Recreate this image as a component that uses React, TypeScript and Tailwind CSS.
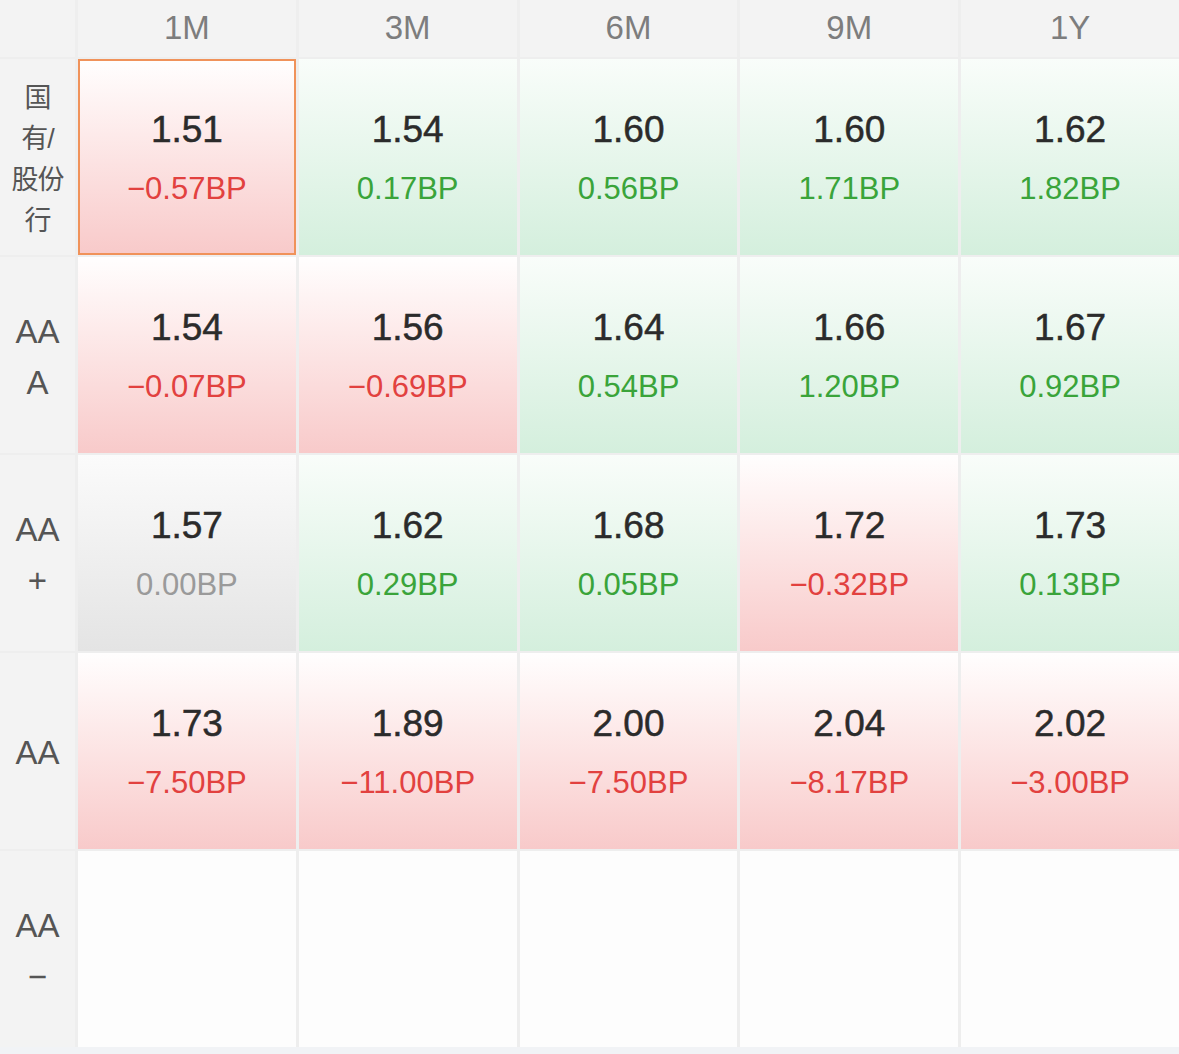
type Tone = 'up' | 'down' | 'flat' | 'none';

type Cell = { value?: string; bp?: string; tone: Tone; selected?: boolean };

const headers = ['1M', '3M', '6M', '9M', '1Y'];

const rows: { label: string[]; cells: Cell[] }[] = [
    {
        label: ['国', '有/', '股份', '行'],
        cells: [
            { value: '1.51', bp: '−0.57BP', tone: 'down', selected: true },
            { value: '1.54', bp: '0.17BP', tone: 'up' },
            { value: '1.60', bp: '0.56BP', tone: 'up' },
            { value: '1.60', bp: '1.71BP', tone: 'up' },
            { value: '1.62', bp: '1.82BP', tone: 'up' },
        ],
    },
    {
        label: ['AA', 'A'],
        cells: [
            { value: '1.54', bp: '−0.07BP', tone: 'down' },
            { value: '1.56', bp: '−0.69BP', tone: 'down' },
            { value: '1.64', bp: '0.54BP', tone: 'up' },
            { value: '1.66', bp: '1.20BP', tone: 'up' },
            { value: '1.67', bp: '0.92BP', tone: 'up' },
        ],
    },
    {
        label: ['AA', '+'],
        cells: [
            { value: '1.57', bp: '0.00BP', tone: 'flat' },
            { value: '1.62', bp: '0.29BP', tone: 'up' },
            { value: '1.68', bp: '0.05BP', tone: 'up' },
            { value: '1.72', bp: '−0.32BP', tone: 'down' },
            { value: '1.73', bp: '0.13BP', tone: 'up' },
        ],
    },
    {
        label: ['AA'],
        cells: [
            { value: '1.73', bp: '−7.50BP', tone: 'down' },
            { value: '1.89', bp: '−11.00BP', tone: 'down' },
            { value: '2.00', bp: '−7.50BP', tone: 'down' },
            { value: '2.04', bp: '−8.17BP', tone: 'down' },
            { value: '2.02', bp: '−3.00BP', tone: 'down' },
        ],
    },
    {
        label: ['AA', '−'],
        cells: [{ tone: 'none' }, { tone: 'none' }, { tone: 'none' }, { tone: 'none' }, { tone: 'none' }],
    },
];

const bgByTone: Record<Tone, string> = {
    down: 'bg-gradient-to-b from-[#fffefe] to-[#f8caca]',
    up: 'bg-gradient-to-b from-[#f9fdfa] to-[#d4efdd]',
    flat: 'bg-gradient-to-b from-[#fbfbfb] to-[#e4e4e4]',
    none: 'bg-[#fdfdfd]',
};

const bpColor: Record<Tone, string> = {
    down: 'text-[#e2413f]',
    up: 'text-[#3aa43a]',
    flat: 'text-[#9a9a9a]',
    none: '',
};

function RateCell({ cell }: { cell: Cell }) {
    return (
        <div
            className={`flex flex-col items-center justify-center ${bgByTone[cell.tone]} ${
                cell.selected ? 'border-2 border-[#f0925a]' : ''
            }`}
        >
            {cell.value && (
                <>
                    <div className="text-[37px] leading-[44px] text-[#2b2b2b] [-webkit-text-stroke:0.5px_#2b2b2b]">
                        {cell.value}
                    </div>
                    <div className={`mt-[19px] text-[31px] leading-[36px] ${bpColor[cell.tone]}`}>{cell.bp}</div>
                </>
            )}
        </div>
    );
}

export default function App() {
    return (
        <div
            className="w-[1179px] h-[1054px] bg-[#eeeeee] overflow-hidden"
            style={{ fontFamily: '"Liberation Sans", "Noto Sans CJK SC", sans-serif' }}
        >
            <div className="grid grid-cols-[75px_repeat(5,1fr)] grid-rows-[57px_repeat(5,196px)] gap-x-[3px] gap-y-[2px]">
                <div className="bg-[#f3f3f3]" />
                {headers.map((h) => (
                    <div key={h} className="flex items-center justify-center bg-[#f3f3f3] pb-[2px] text-[33px] text-[#7d7d7d]">
                        {h}
                    </div>
                ))}

                {rows.map((row, i) => (
                    <div key={i} className="contents">
                        <div
                            className={`flex flex-col items-center justify-center bg-[#f3f3f3] text-[#555555] ${
                                row.label.length > 2 ? 'pt-[6px]' : 'pt-[3px]'
                            }`}
                        >
                            {row.label.map((l, j) => (
                                <div
                                    key={j}
                                    className={
                                        row.label.length > 2
                                            ? 'text-[27px] leading-[41px] tracking-[-1px]'
                                            : 'text-[33px] leading-[51px]'
                                    }
                                >
                                    {l}
                                </div>
                            ))}
                        </div>
                        {row.cells.map((c, k) => (
                            <RateCell key={k} cell={c} />
                        ))}
                    </div>
                ))}
            </div>
            <div className="h-[7px] bg-[#f1f3f6]" />
        </div>
    );
}
